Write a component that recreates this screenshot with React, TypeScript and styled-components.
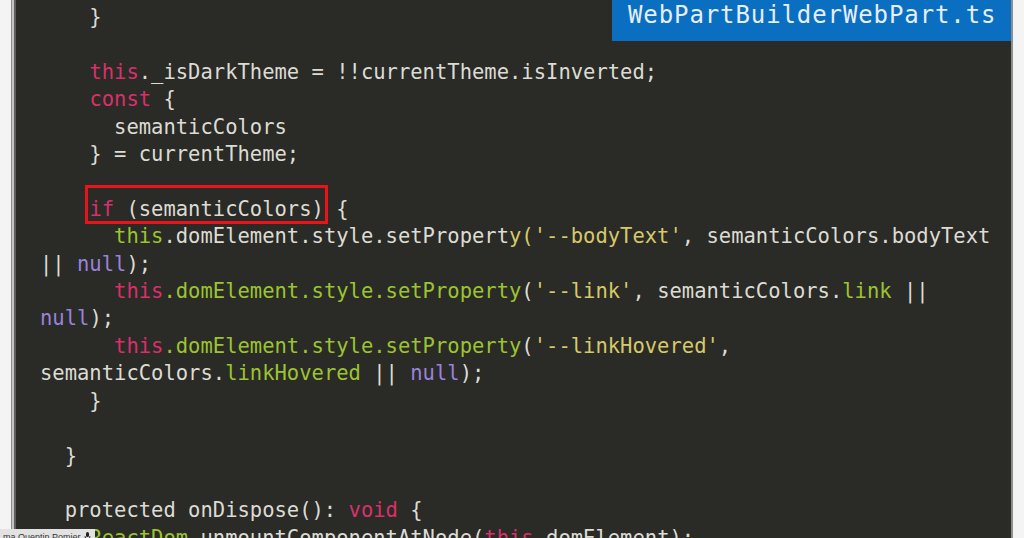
import React from 'react';
import styled, { createGlobalStyle } from 'styled-components';

type Tone = 'plain' | 'keyword' | 'fn' | 'str' | 'lit';

const toneColors: Record<Tone, string> = {
  plain: '#dcdcd4',
  keyword: '#d9306c',
  fn: '#9cc430',
  str: '#d6c96a',
  lit: '#9a82dc',
};

const GlobalStyle = createGlobalStyle`
  html, body {
    margin: 0;
    padding: 0;
    background: #f4f4f4;
    overflow: hidden;
  }
`;

const Page = styled.div`
  display: flex;
  height: 538px;
  width: 1024px;
  overflow: hidden;
  background: #f4f4f4;
`;

const Panel = styled.div`
  position: relative;
  margin-left: 11px;
  width: 999px;
  background: #2a2a26;
  border-left: 1px solid #8a8a8a;
  border-right: 2px solid #8e8e8e;
  box-shadow: inset 2px 0 0 #c4c4c4, inset 4px 0 0 #5e5e5e;
  overflow: hidden;
`;

const Code = styled.div`
  padding: 4px 0 0 28px;
  font-family: 'DejaVu Sans Mono', monospace;
  font-size: 20.5px;
  line-height: 27.42px;
  color: ${toneColors.plain};
  white-space: pre;
`;

const Line = styled.div`
  height: 27.42px;
`;

const Tok = styled.span<{ $tone: Tone }>`
  color: ${(p) => toneColors[p.$tone]};
`;

const Highlight = styled.span`
  border: 3px solid #e8141c;
  padding: 9px 1px 0;
  margin: 0 -4px;
`;

const FileTag = styled.div`
  position: absolute;
  top: 0;
  right: -2px;
  width: 401px;
  height: 41px;
  box-sizing: border-box;
  padding: 0 0 0 16px;
  background: #0a6fc1;
  color: #e6eef6;
  font-family: 'DejaVu Sans Mono', monospace;
  font-size: 24px;
  letter-spacing: 0.9px;
  line-height: 30px;
`;

const NameTag = styled.div`
  position: absolute;
  left: 0;
  bottom: -6px;
  display: flex;
  align-items: center;
  gap: 3px;
  padding: 0 4px 0 3px;
  height: 15px;
  background: #e2e2e2;
  color: #333;
  font-family: 'Liberation Sans', Arial, sans-serif;
  font-size: 9px;
  z-index: 2;
`;

const MicIcon = () => (
  <svg width="7" height="9" viewBox="0 0 7 9">
    <rect x="2" y="0" width="3" height="5" rx="1.5" fill="#222" />
    <path d="M1 4 Q1 7 3.5 7 Q6 7 6 4" stroke="#222" fill="none" strokeWidth="0.9" />
  </svg>
);

type Seg = [Tone, string];

const lines: Seg[][] = [
  [['plain', '    }']],
  [],
  [['plain', '    '], ['keyword', 'this'], ['plain', '._isDarkTheme = !!currentTheme.isInverted;']],
  [['plain', '    '], ['keyword', 'const'], ['plain', ' {']],
  [['plain', '      semanticColors']],
  [['plain', '    } = currentTheme;']],
  [],
  [], // if line, rendered separately
  [
    ['plain', '      '],
    ['fn', 'this'],
    ['plain', '.domElement.style.setPropert'],
    ['str', "y('--bodyText'"],
    ['plain', ', semanticColors.bodyText'],
  ],
  [['plain', '|| '], ['lit', 'null'], ['plain', ');']],
  [
    ['plain', '      '],
    ['keyword', 'this'],
    ['fn', '.domElement.style.setProperty'],
    ['plain', '('],
    ['str', "'--link'"],
    ['plain', ', semanticColors.'],
    ['fn', 'link'],
    ['plain', ' ||'],
  ],
  [['lit', 'null'], ['plain', ');']],
  [
    ['plain', '      '],
    ['keyword', 'this'],
    ['fn', '.domElement.style.setProperty'],
    ['plain', '('],
    ['str', "'--linkHovered'"],
    ['plain', ','],
  ],
  [['plain', 'semanticColors.'], ['fn', 'linkHovered'], ['plain', ' || '], ['lit', 'null'], ['plain', ');']],
  [['plain', '    }']],
  [],
  [['plain', '  }']],
  [],
  [['plain', '  protected onDispose(): '], ['keyword', 'void'], ['plain', ' {']],
  [
    ['plain', '    '],
    ['fn', 'ReactDom'],
    ['plain', '.unmountComponentAtNode('],
    ['keyword', 'this'],
    ['plain', '.domElement);'],
  ],
];

const App: React.FC = () => {
  return (
    <Page>
      <GlobalStyle />
      <Panel>
        <FileTag>WebPartBuilderWebPart.ts</FileTag>
        <Code>
          {lines.map((segs, i) =>
            i === 7 ? (
              <Line key={i}>
                {'    '}
                <Highlight>
                  <Tok $tone="keyword">if</Tok> (semanticColors)
                </Highlight>{' '}
                {'{'}
              </Line>
            ) : (
              <Line key={i}>
                {segs.map(([tone, text], j) => (
                  <Tok key={j} $tone={tone}>
                    {text}
                  </Tok>
                ))}
              </Line>
            )
          )}
        </Code>
      </Panel>
      <NameTag>
        ma Quentin Pomier <MicIcon />
      </NameTag>
    </Page>
  );
};

export default App;
